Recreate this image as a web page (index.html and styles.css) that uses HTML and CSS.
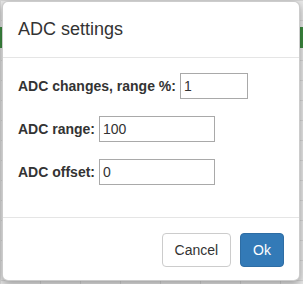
FILE: index.html
```html
<!DOCTYPE html>
<html>
<head>
<meta charset="utf-8">
<link rel="stylesheet" href="styles.css">
</head>
<body>
<div class="page">
  <div class="navbar"></div>
</div>
<div class="modal">
  <div class="modal-header">
    <h4 class="modal-title">ADC settings</h4>
  </div>
  <div class="modal-body">
    <div class="row">
      <label class="lbl">ADC changes, range %:</label>
      <input class="inp inp-short" type="text" value="1">
    </div>
    <div class="row">
      <label class="lbl">ADC range:</label>
      <input class="inp inp-long" type="text" value="100">
    </div>
    <div class="row">
      <label class="lbl">ADC offset:</label>
      <input class="inp inp-long" type="text" value="0">
    </div>
  </div>
  <div class="modal-footer">
    <button class="btn btn-default">Cancel</button>
    <button class="btn btn-primary">Ok</button>
  </div>
</div>
</body>
</html>
```

FILE: styles.css
```css
html, body {
  margin: 0;
  padding: 0;
}
body {
  width: 303px;
  height: 284px;
  overflow: hidden;
  position: relative;
  background-color: #e9e9e9;
  background-image:
    linear-gradient(to right, #d6d6d6 1px, transparent 1px),
    linear-gradient(to bottom, #d6d6d6 1px, transparent 1px);
  background-size: 40px 20px;
  font-family: "Liberation Sans", Arial, Helvetica, sans-serif;
  color: #333;
}
.page {
  padding-top: 27px;
}
.navbar {
  height: 21px;
  background: #3c8a3f;
}
.modal {
  position: absolute;
  top: 1px;
  left: 2px;
  width: 298px;
  box-sizing: border-box;
  background: #fff;
  border: 1px solid rgba(0, 0, 0, 0.2);
  border-radius: 6px;
  box-shadow: 0 3px 9px rgba(0, 0, 0, 0.35);
}
.modal-header {
  padding: 15px;
  border-bottom: 1px solid #e5e5e5;
}
.modal-title {
  margin: 0;
  font-size: 18px;
  font-weight: 500;
  line-height: 25px;
}
.modal-body {
  padding: 15px 15px 32px 15px;
  display: flex;
  flex-direction: column;
  gap: 17px;
}
.row {
  display: flex;
  align-items: center;
  gap: 4px;
}
.lbl {
  font-size: 14px;
  font-weight: bold;
}
.inp {
  box-sizing: border-box;
  height: 26px;
  border: 1px solid #a9a9a9;
  padding: 0 3px;
  margin: 0;
  font-family: "Liberation Sans", Arial, sans-serif;
  font-size: 14px;
  color: #333;
  background: #fff;
}
.inp-short { width: 68px; }
.inp-long { width: 116px; }
.modal-footer {
  padding: 15px 15px 13px 15px;
  border-top: 1px solid #e5e5e5;
  display: flex;
  justify-content: flex-end;
  gap: 9px;
}
.btn {
  box-sizing: border-box;
  height: 34px;
  padding: 6px 12px;
  font-family: "Liberation Sans", Arial, sans-serif;
  font-size: 14px;
  line-height: 20px;
  border-radius: 4px;
  border: 1px solid transparent;
  margin: 0;
}
.btn-default {
  background: #fff;
  border-color: #ccc;
  color: #333;
}
.btn-primary {
  background: #337ab7;
  border-color: #2e6da4;
  color: #fff;
}
```
